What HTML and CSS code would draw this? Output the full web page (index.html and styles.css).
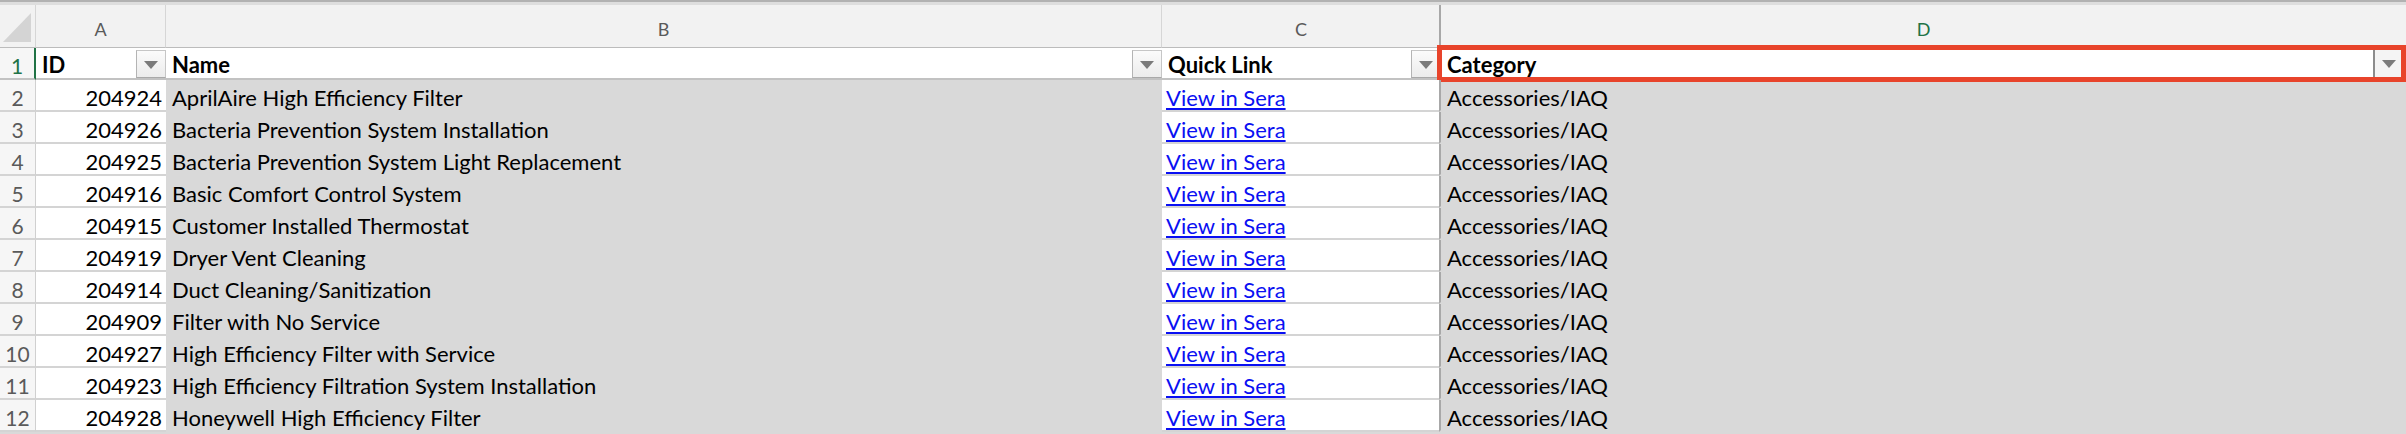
FILE: index.html
```html
<!DOCTYPE html>
<html>

<head>
  <meta charset="UTF-8">
  <title>Sera Items</title>
  <link rel="stylesheet" href="styles.css">
</head>

<body>

  <div class="sheet">
    <div class="topline"></div>

    <div class="grid">
      <!-- column headers -->
      <div class="corner">
        <svg width="30" height="31" viewBox="0 0 30 31"><polygon points="1,30 29,30 29,1" fill="#d4d4d4" /></svg>
      </div>
      <div class="colhead">A</div>
      <div class="colhead">B</div>
      <div class="colhead">C</div>
      <div class="colhead active">D</div>

      <!-- row 1 -->
      <div class="rownum active">1</div>
      <div class="cell white hdr">ID<span class="filter"></span></div>
      <div class="cell white hdr">Name<span class="filter"></span></div>
      <div class="cell white hdr">Quick Link<span class="filter"></span></div>
      <div class="cell white hdr last">Category<span class="filter dark"></span><span class="mark"></span></div>

      <div class="rownum">2</div>
      <div class="cell white num">204924</div>
      <div class="cell">AprilAire High Efficiency Filter</div>
      <div class="cell white link"><a href="#">View in Sera</a></div>
      <div class="cell last">Accessories/IAQ</div>

      <div class="rownum">3</div>
      <div class="cell white num">204926</div>
      <div class="cell">Bacteria Prevention System Installation</div>
      <div class="cell white link"><a href="#">View in Sera</a></div>
      <div class="cell last">Accessories/IAQ</div>

      <div class="rownum">4</div>
      <div class="cell white num">204925</div>
      <div class="cell">Bacteria Prevention System Light Replacement</div>
      <div class="cell white link"><a href="#">View in Sera</a></div>
      <div class="cell last">Accessories/IAQ</div>

      <div class="rownum">5</div>
      <div class="cell white num">204916</div>
      <div class="cell">Basic Comfort Control System</div>
      <div class="cell white link"><a href="#">View in Sera</a></div>
      <div class="cell last">Accessories/IAQ</div>

      <div class="rownum">6</div>
      <div class="cell white num">204915</div>
      <div class="cell">Customer Installed Thermostat</div>
      <div class="cell white link"><a href="#">View in Sera</a></div>
      <div class="cell last">Accessories/IAQ</div>

      <div class="rownum">7</div>
      <div class="cell white num">204919</div>
      <div class="cell">Dryer Vent Cleaning</div>
      <div class="cell white link"><a href="#">View in Sera</a></div>
      <div class="cell last">Accessories/IAQ</div>

      <div class="rownum">8</div>
      <div class="cell white num">204914</div>
      <div class="cell">Duct Cleaning/Sanitization</div>
      <div class="cell white link"><a href="#">View in Sera</a></div>
      <div class="cell last">Accessories/IAQ</div>

      <div class="rownum">9</div>
      <div class="cell white num">204909</div>
      <div class="cell">Filter with No Service</div>
      <div class="cell white link"><a href="#">View in Sera</a></div>
      <div class="cell last">Accessories/IAQ</div>

      <div class="rownum">10</div>
      <div class="cell white num">204927</div>
      <div class="cell">High Efficiency Filter with Service</div>
      <div class="cell white link"><a href="#">View in Sera</a></div>
      <div class="cell last">Accessories/IAQ</div>

      <div class="rownum">11</div>
      <div class="cell white num">204923</div>
      <div class="cell">High Efficiency Filtration System Installation</div>
      <div class="cell white link"><a href="#">View in Sera</a></div>
      <div class="cell last">Accessories/IAQ</div>

      <div class="rownum">12</div>
      <div class="cell white num">204928</div>
      <div class="cell">Honeywell High Efficiency Filter</div>
      <div class="cell white link"><a href="#">View in Sera</a></div>
      <div class="cell last">Accessories/IAQ</div>
    </div>
  </div>

</body>

</html>
```

FILE: styles.css
```css
:root {
  --sheet-gray: #d9d9d9;
  --head-bg: #f2f2f2;
  --grid-line: #d4d4d4;
  --excel-green: #217346;
  --note-red: #e8442b;
}

body {
  margin: 0;
  background-color: var(--sheet-gray);
  font-family: 'Lato', 'Liberation Sans', sans-serif;
  color: #000;
  overflow: hidden;
}

.topline {
  height: 3px;
  border-top: 2px solid #b2b2b2;
  background-color: #dedede;
}

.grid {
  display: grid;
  grid-template-columns: 36px 130px 996px 279px 1fr;
  grid-template-rows: 43px repeat(12, 32px);
}

.corner {
  background-color: var(--head-bg);
  border-right: 1px solid #d6d6d6;
  border-bottom: 1px solid #bcbcbc;
  display: flex;
  align-items: flex-end;
  justify-content: flex-end;
  padding: 0 3px 4px 0;
}

.colhead {
  background-color: var(--head-bg);
  border-right: 1px solid #d6d6d6;
  border-bottom: 1px solid #bcbcbc;
  color: #5a5a5a;
  font-size: 18px;
  text-align: center;
  line-height: 20px;
  padding-top: 14px;
}

.colhead.active {
  color: var(--excel-green);
  border-left: 2px solid #a8a8a8;
  margin-left: -2px;
  border-right: none;
}

.rownum {
  background-color: #f6f6f6;
  border-right: 1px solid #d0d0d0;
  border-bottom: 2px solid var(--grid-line);
  color: #5a5a5a;
  font-size: 21px;
  text-align: center;
  line-height: 22px;
  padding-top: 7px;
}

.rownum.active {
  color: var(--excel-green);
  border-right: 2px solid var(--excel-green);
  border-bottom-color: #c2c2c2;
}

.cell {
  position: relative;
  font-size: 22px;
  line-height: 22px;
  padding: 7px 0 0 6px;
  white-space: nowrap;
  overflow: visible;
  border-bottom: 2px solid var(--sheet-gray);
}

.cell.white {
  background-color: #fff;
  border-bottom-color: var(--grid-line);
}

.cell.last {
  border-left: 2px solid #a8a8a8;
  margin-left: -2px;
}

.cell.hdr {
  background-color: #fff;
  font-weight: bold;
  padding-top: 6px;
  border-bottom-color: #c2c2c2;
}

.cell.hdr:first-of-type {
  padding-left: 7px;
}

.num {
  text-align: right;
  padding: 7px 4px 0 0;
}

.link {
  padding-left: 4px;
}

.link a {
  color: #0a10f2;
  text-decoration: underline;
  text-underline-offset: 2px;
}

.filter {
  position: absolute;
  right: 0;
  top: 2px;
  width: 30px;
  height: 28px;
  box-sizing: border-box;
  border: 1px solid #c6c6c6;
  border-left-color: #b4b4b4;
  border-bottom-color: #a9a9a9;
  background: linear-gradient(#fbfbfb, #ececec);
}

.filter::after {
  content: '';
  position: absolute;
  left: 7px;
  top: 10px;
  border-left: 7px solid transparent;
  border-right: 7px solid transparent;
  border-top: 8px solid #7b7b7b;
}

.filter.dark {
  right: 5px;
  width: 28px;
  border: none;
  border-left: 2px solid #8c8c8c;
  background: #f4f4f4;
}

.mark {
  position: absolute;
  left: -4px;
  top: -3px;
  right: 0;
  bottom: -4px;
  border: 5px solid var(--note-red);
}
```
